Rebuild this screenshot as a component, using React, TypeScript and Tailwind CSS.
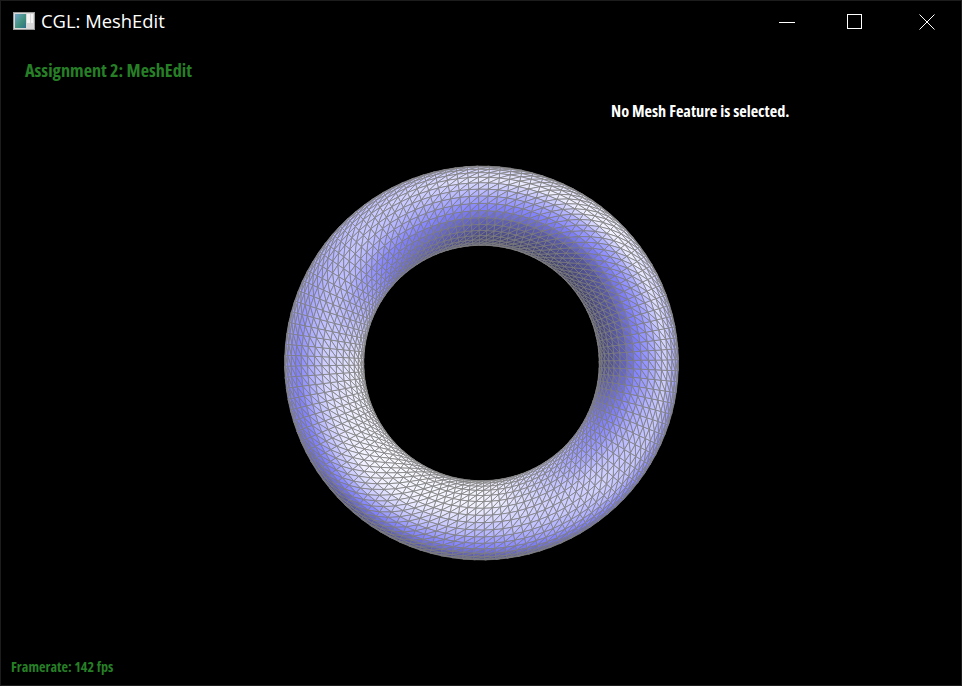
import { useMemo } from "react";

const W = 960;
const H = 654;
const CX = 480.5;
const CY = 331;
const MAJOR = 112;
const MINOR = 36;

type V = [number, number, number];

// brightness picked off the reference: rows go round the ring from the right, counter-clockwise,
// columns go across the tube from inner rim to outer rim
const SHADE = [
  [0.12, 0.2, 0.28, 0.42, 0.55, 0.72, 0.5], // right
  [0.06, 0.16, 0.22, 0.38, 0.55, 0.88, 0.85], // upper right
  [0.1, 0.18, 0.28, 0.44, 0.62, 0.82, 0.72], // top
  [0.32, 0.4, 0.46, 0.6, 0.68, 0.66, 0.62], // upper left
  [0.88, 0.82, 0.76, 0.72, 0.58, 0.42, 0.5], // left
  [0.92, 0.95, 0.92, 0.87, 0.72, 0.42, 0.16], // lower left
  [0.88, 0.92, 0.88, 0.76, 0.62, 0.42, 0.18], // bottom
  [0.62, 0.52, 0.58, 0.7, 0.74, 0.65, 0.34], // lower right
];

const RAMP: [number, number, number, number][] = [
  [0, 45, 45, 60],
  [0.22, 85, 85, 155],
  [0.42, 130, 130, 255],
  [0.65, 190, 190, 255],
  [0.85, 238, 238, 255],
  [1, 255, 255, 255],
];

function ramp(t: number) {
  const v = Math.min(1, Math.max(0, t));
  for (let i = 1; i < RAMP.length; i++) {
    if (v <= RAMP[i][0]) {
      const a = RAMP[i - 1];
      const b = RAMP[i];
      const k = (v - a[0]) / (b[0] - a[0]);
      const c = [1, 2, 3].map((j) => Math.round(a[j] + (b[j] - a[j]) * k));
      return `rgb(${c[0]},${c[1]},${c[2]})`;
    }
  }
  return "rgb(255,255,255)";
}

function shadeAt(x: number, y: number) {
  const dx = x - CX;
  const dy = CY - y;
  const rho = Math.hypot(dx, dy);
  const u = Math.min(5.999, Math.max(0, ((rho - 116) / 81) * 6));
  let ang = Math.atan2(dy, dx);
  if (ang < 0) ang += Math.PI * 2;
  const s = (ang / (Math.PI * 2)) * 8;
  const i0 = Math.floor(s) % 8;
  const i1 = (i0 + 1) % 8;
  const fs = s - Math.floor(s);
  const j0 = Math.floor(u);
  const fu = u - j0;
  const at = (i: number) => SHADE[i][j0] * (1 - fu) + SHADE[i][j0 + 1] * fu;
  return at(i0) * (1 - fs) + at(i1) * fs;
}

function buildMesh() {
  const R = 1;
  const r = 0.2445;
  const D = 4;
  const f = 627;
  type P = { p: [number, number]; z: number };
  const pts: P[][] = [];
  for (let i = 0; i < MAJOR; i++) {
    const row: P[] = [];
    const a = ((i + 0.3) / MAJOR) * Math.PI * 2;
    for (let j = 0; j < MINOR; j++) {
      const b = (j / MINOR) * Math.PI * 2;
      const pos: V = [
        (R + r * Math.cos(b)) * Math.cos(a),
        (R + r * Math.cos(b)) * Math.sin(a),
        r * Math.sin(b),
      ];
      const s = f / (D - pos[2]);
      row.push({ p: [CX + pos[0] * s, CY - pos[1] * s], z: pos[2] });
    }
    pts.push(row);
  }
  const tris: { d: string; fill: string; z: number }[] = [];
  const add = (a: P, b: P, c: P) => {
    const area =
      (b.p[0] - a.p[0]) * (c.p[1] - a.p[1]) - (b.p[1] - a.p[1]) * (c.p[0] - a.p[0]);
    if (area > 0) return;
    const mx = (a.p[0] + b.p[0] + c.p[0]) / 3;
    const my = (a.p[1] + b.p[1] + c.p[1]) / 3;
    tris.push({
      d: `M${a.p[0].toFixed(1)} ${a.p[1].toFixed(1)}L${b.p[0].toFixed(1)} ${b.p[1].toFixed(1)}L${c.p[0].toFixed(1)} ${c.p[1].toFixed(1)}Z`,
      fill: ramp(shadeAt(mx, my)),
      z: (a.z + b.z + c.z) / 3,
    });
  };
  for (let i = 0; i < MAJOR; i++) {
    for (let j = 0; j < MINOR; j++) {
      const a = pts[i][j];
      const b = pts[(i + 1) % MAJOR][j];
      const c = pts[(i + 1) % MAJOR][(j + 1) % MINOR];
      const d = pts[i][(j + 1) % MINOR];
      add(a, b, c);
      add(a, c, d);
    }
  }
  tris.sort((x, y) => x.z - y.z);
  return tris;
}

function Torus() {
  const tris = useMemo(buildMesh, []);
  return (
    <svg width={W} height={H} viewBox={`0 0 ${W} ${H}`} className="absolute inset-0">
      {tris.map((t, i) => (
        <path key={i} d={t.d} fill={t.fill} stroke="#808080" strokeWidth={0.75} />
      ))}
    </svg>
  );
}

function AppIcon() {
  return (
    <svg width="22" height="19" viewBox="0 0 22 19" className="shrink-0">
      <defs>
        <linearGradient id="ico" x1="0" y1="0" x2="1" y2="1">
          <stop offset="0" stopColor="#6fa3c8" />
          <stop offset="0.6" stopColor="#3f8f7a" />
          <stop offset="1" stopColor="#2e6f8f" />
        </linearGradient>
      </defs>
      <rect x="0.5" y="0.5" width="21" height="17" fill="#d8d8d8" stroke="#9a9a9a" />
      <rect x="2" y="2" width="11" height="14" fill="url(#ico)" />
      <rect x="14" y="2" width="3" height="9" fill="#f4f4f4" />
      <rect x="18" y="2" width="2" height="9" fill="#f4f4f4" />
    </svg>
  );
}

export default function App() {
  return (
    <div className="w-[962px] h-[686px] bg-black border border-[#1c1c1c] flex flex-col overflow-hidden">
      <div className="h-[31px] flex items-center text-white shrink-0">
        <div className="flex items-center flex-1 pl-3 pt-[10px]">
          <AppIcon />
          <span className="ml-[6px] text-[18.4px] leading-none font-['Open_Sans',sans-serif]">CGL: MeshEdit</span>
        </div>
        <div className="flex pt-[10px]">
          <button className="w-[63px] flex justify-center">
            <svg width="16" height="16" viewBox="0 0 16 16" shapeRendering="crispEdges">
              <path d="M0 8.5H16" stroke="white" />
            </svg>
          </button>
          <button className="w-[74px] flex justify-center">
            <svg width="16" height="16" viewBox="0 0 16 16" shapeRendering="crispEdges">
              <rect x="0.5" y="0.5" width="14" height="14" fill="none" stroke="white" />
            </svg>
          </button>
          <button className="w-[69px] flex justify-center">
            <svg width="16" height="16" viewBox="0 0 16 16">
              <path d="M0.5 0.5L15.5 15.5M15.5 0.5L0.5 15.5" stroke="white" />
            </svg>
          </button>
        </div>
      </div>
      <div className="relative flex-1 font-['Open_Sans',sans-serif] font-bold [font-stretch:75%]">
        <Torus />
        <div className="absolute left-[24px] top-[27px] text-[18.2px] leading-[22px] text-[#267f26]">
          Assignment 2: MeshEdit
        </div>
        <div className="absolute left-[610px] top-[69px] text-[16.3px] leading-[20px] text-white">
          No Mesh Feature is selected.
        </div>
        <div className="absolute left-[10px] bottom-[10px] text-[14.2px] leading-[16px] text-[#267f26]">
          Framerate: 142 fps
        </div>
      </div>
    </div>
  );
}
